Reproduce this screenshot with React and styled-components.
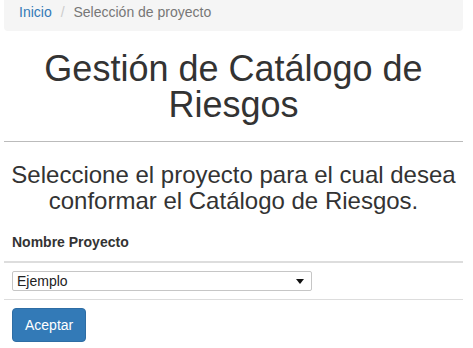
import React from 'react';
import styled, { createGlobalStyle } from 'styled-components';

const GlobalStyle = createGlobalStyle`
  body {
    margin: 0;
    font-family: "Liberation Sans", Arial, sans-serif;
    font-size: 14px;
    line-height: 1.42857;
    color: #333;
    background: #fff;
  }
`;

const Page = styled.div`
  padding: 0 10px 0 4px;
  margin-top: -5px;
`;

const Breadcrumb = styled.ol`
  list-style: none;
  margin: 0 0 20px;
  padding: 8px 15px;
  background: #f5f5f5;
  border-radius: 4px;
`;

const Crumb = styled.li`
  display: inline-block;
  color: ${props => (props.active ? '#777' : '#337ab7')};
`;

const Divider = styled.span`
  padding: 0 5px 0 9px;
  color: #ccc;
`;

const Title = styled.h1`
  margin: 20px 0 10px;
  font-size: 36px;
  font-weight: 500;
  line-height: 36px;
  text-align: center;
`;

const Rule = styled.hr`
  margin: 18px 0 20px;
  border: 0;
  border-top: 1px solid #bbb;
`;

const Subtitle = styled.h3`
  margin: 20px 0 10px;
  font-size: 24px;
  font-weight: 500;
  line-height: 1.1;
  text-align: center;
`;

const Table = styled.table`
  width: 100%;
  border-collapse: collapse;
  border-spacing: 0;
  margin-bottom: 20px;
`;

const Th = styled.th`
  text-align: left;
  padding: 8px;
  vertical-align: bottom;
  border-bottom: 2px solid #ddd;
`;

const Td = styled.td`
  padding: 8px;
  line-height: 1.42857;
  border-top: 1px solid #ddd;
`;

const SelectWrap = styled.div`
  position: relative;
  display: inline-block;
  vertical-align: top;

  &::after {
    content: "";
    position: absolute;
    right: 8px;
    top: 8px;
    border-left: 4px solid transparent;
    border-right: 4px solid transparent;
    border-top: 5px solid #111;
    pointer-events: none;
  }
`;

const Select = styled.select`
  appearance: none;
  display: block;
  width: 300px;
  height: 20px;
  margin: 0;
  padding: 0 20px 0 4px;
  font-family: "Liberation Sans", Arial, sans-serif;
  font-size: 14px;
  color: #222;
  background: #fff;
  border: 1px solid #c6c6c6;
  border-radius: 2px;
`;

const Button = styled.button`
  display: inline-block;
  padding: 6px 12px;
  font-family: "Liberation Sans", Arial, sans-serif;
  font-size: 14px;
  line-height: 20px;
  color: #fff;
  background: #337ab7;
  border: 1px solid #2e6da4;
  border-radius: 4px;
  cursor: pointer;
`;

export default function App() {
  return (
    <Page>
      <GlobalStyle />
      <Breadcrumb>
        <Crumb>Inicio</Crumb>
        <Divider>/&nbsp;</Divider>
        <Crumb active>Selección de proyecto</Crumb>
      </Breadcrumb>
      <Title>Gestión de Catálogo de Riesgos</Title>
      <Rule />
      <Subtitle>Seleccione el proyecto para el cual desea conformar el Catálogo de Riesgos.</Subtitle>
      <Table>
        <thead>
          <tr>
            <Th>Nombre Proyecto</Th>
          </tr>
        </thead>
        <tbody>
          <tr>
            <Td>
              <SelectWrap>
                <Select defaultValue="ejemplo">
                  <option value="ejemplo">Ejemplo</option>
                </Select>
              </SelectWrap>
            </Td>
          </tr>
          <tr>
            <Td>
              <Button type="button">Aceptar</Button>
            </Td>
          </tr>
        </tbody>
      </Table>
    </Page>
  );
}
